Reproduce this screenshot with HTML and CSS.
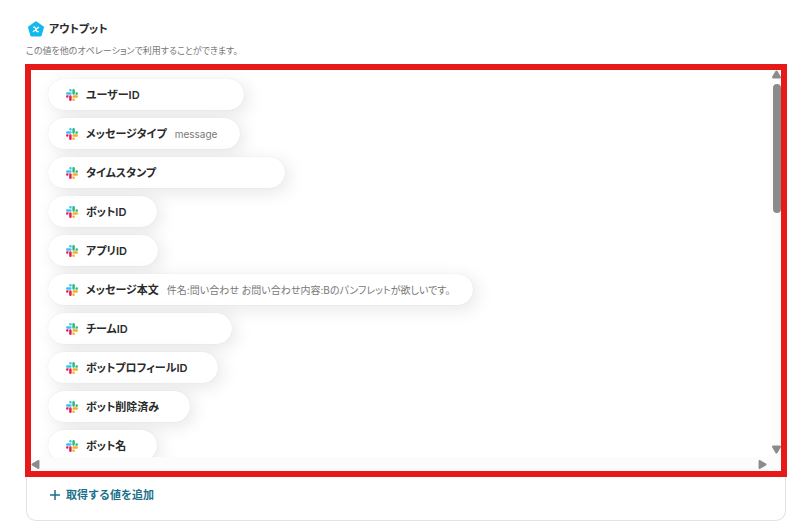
FILE: index.html
```html
<!DOCTYPE html>
<html lang="ja">
<head>
    <meta charset="UTF-8">
    <title>アウトプット</title>
    <link rel="stylesheet" href="styles.css">
</head>
<body>
<svg class="symbols" aria-hidden="true">
    <symbol id="slack" viewBox="0 0 24 24">
        <path fill="#36c5f0" d="M8.8 0a2.5 2.5 0 0 0 0 5h2.5V2.5A2.5 2.5 0 0 0 8.8 0zM8.8 6.3H2.5a2.5 2.5 0 0 0 0 5h6.3a2.5 2.5 0 0 0 0-5z"/>
        <path fill="#2eb67d" d="M24 8.8a2.5 2.5 0 0 0-5 0v2.5h2.5A2.5 2.5 0 0 0 24 8.8zM17.7 8.8V2.5a2.5 2.5 0 0 0-5 0v6.3a2.5 2.5 0 0 0 5 0z"/>
        <path fill="#ecb22e" d="M15.2 24a2.5 2.5 0 0 0 0-5h-2.5v2.5a2.5 2.5 0 0 0 2.5 2.5zM15.2 17.7h6.3a2.5 2.5 0 0 0 0-5h-6.3a2.5 2.5 0 0 0 0 5z"/>
        <path fill="#e8195a" d="M0 15.2a2.5 2.5 0 0 0 5 0v-2.5H2.5A2.5 2.5 0 0 0 0 15.2zM6.3 15.2v6.3a2.5 2.5 0 0 0 5 0v-6.3a2.5 2.5 0 0 0-5 0z"/>
    </symbol>
</svg>
<div class="output">
    <div class="head">
        <svg class="head_icon" viewBox="0 0 16 16" aria-hidden="true">
            <path fill="#12b9ec" stroke="#12b9ec" stroke-width="2" stroke-linejoin="round" d="M8 1.2L15 6.2L12.6 14.6H3.4L1 6.2z"/>
            <path fill="none" stroke="#fff" stroke-width="1.3" stroke-linecap="round" stroke-linejoin="round" d="M5.6 6.2h1.2l2.2 4.4h1.4M10.6 6.2L5.4 10.6"/>
        </svg>
        <h1>アウトプット</h1>
    </div>
    <p class="note">この値を他のオペレーションで利用することができます。</p>

    <div class="card">
        <div class="frame">
            <ul class="list">
                <li><svg class="slack"><use href="#slack"/></svg><span class="name">ユーザーID</span><span class="value blank"></span></li>
                <li><svg class="slack"><use href="#slack"/></svg><span class="name">メッセージタイプ</span><span class="value">message</span></li>
                <li><svg class="slack"><use href="#slack"/></svg><span class="name">タイムスタンプ</span><span class="value blank_long"></span></li>
                <li><svg class="slack"><use href="#slack"/></svg><span class="name">ボットID</span><span class="value"></span></li>
                <li><svg class="slack"><use href="#slack"/></svg><span class="name">アプリID</span><span class="value"></span></li>
                <li><svg class="slack"><use href="#slack"/></svg><span class="name">メッセージ本文</span><span class="value">件名:問い合わせ お問い合わせ内容:Bのパンフレットが欲しいです。</span></li>
                <li><svg class="slack"><use href="#slack"/></svg><span class="name">チームID</span><span class="value blank"></span></li>
                <li><svg class="slack"><use href="#slack"/></svg><span class="name">ボットプロフィールID</span><span class="value"></span></li>
                <li><svg class="slack"><use href="#slack"/></svg><span class="name">ボット削除済み</span><span class="value"></span></li>
                <li><svg class="slack"><use href="#slack"/></svg><span class="name">ボット名</span><span class="value"></span></li>
            </ul>
            <div class="bar_y">
                <button type="button" aria-label="上へ"><svg viewBox="0 0 8 8"><path d="M4 1.5L7 6.5H1z"/></svg></button>
                <span class="thumb"></span>
                <button type="button" class="last" aria-label="下へ"><svg viewBox="0 0 8 8"><path d="M4 6.5L7 1.5H1z"/></svg></button>
            </div>
            <div class="bar_x">
                <button type="button" aria-label="左へ"><svg viewBox="0 0 8 8"><path d="M1.5 4L6.5 1V7z"/></svg></button>
                <button type="button" class="last" aria-label="右へ"><svg viewBox="0 0 8 8"><path d="M6.5 4L1.5 1V7z"/></svg></button>
            </div>
        </div>
        <button type="button" class="add">
            <svg viewBox="0 0 10 10" aria-hidden="true"><path d="M5 0v10M0 5h10"/></svg>
            取得する値を追加
        </button>
    </div>
</div>
</body>
</html>
```

FILE: styles.css
```css
*{
    margin: 0;
    padding: 0;
    box-sizing: border-box;
}
body{
    background-color: #fff;
    color: #2a2a2a;
    font-family: Inter, "Noto Sans CJK JP", sans-serif;
    font-feature-settings: "palt";
}
button{
    border: none;
    background: none;
    font: inherit;
    cursor: pointer;
}
.symbols{
    display: none;
}
.output{
    padding: 20px 24px 8px 26px;
}
.head{
    display: flex;
    align-items: center;
    gap: 5px;
    padding-left: 2px;
}
.head_icon{
    width: 16px;
    height: 16px;
}
.head h1{
    font-size: 11px;
    line-height: 18px;
    font-weight: 600;
}
.note{
    margin: 5px 0;
    font-size: 9px;
    line-height: 16px;
    color: #777;
}
.card{
    border: 1px solid #e3e3e3;
    border-top: none;
    border-radius: 0 0 10px 10px;
}
.frame{
    display: grid;
    grid-template-columns: 1fr 11px;
    grid-template-rows: auto 14px;
    margin: 0 -2px;
    border: 6px solid #e71a1a;
    background-color: #fcfcfc;
}
/* 一覧 */
.list{
    display: flex;
    flex-direction: column;
    align-items: flex-start;
    gap: 8px;
    height: 387px;
    padding: 9px 17px;
    overflow: hidden;
    list-style: none;
    background-color: #fff;
}
.list li{
    flex: none;
    display: flex;
    align-items: center;
    height: 31px;
    padding: 0 23px 0 18px;
    border-radius: 16px;
    background-color: #fff;
    box-shadow: 0 0 1px rgba(0, 0, 0, .12), 4px 4px 18px rgba(0, 0, 0, .1);
    white-space: nowrap;
}
.slack{
    width: 12px;
    height: 12px;
    margin-right: 8px;
}
.name{
    font-size: 11px;
    line-height: 18px;
    font-weight: 600;
}
.value{
    margin-left: 8px;
    font-size: 10px;
    line-height: 18px;
    color: #777;
}
.blank{
    width: 73px;
}
.blank_long{
    width: 98px;
}
/* スクロールバー */
.bar_y,
.bar_x{
    display: flex;
}
.bar_y{
    flex-direction: column;
    align-items: flex-end;
    padding-bottom: 3px;
}
.bar_x{
    align-items: center;
    padding-right: 3px;
}
.bar_y button,
.bar_x button{
    display: flex;
}
.bar_y svg,
.bar_x svg{
    width: 9px;
    height: 9px;
    fill: #8b8b8b;
    stroke: #8b8b8b;
    stroke-width: 2;
    stroke-linejoin: round;
}
.thumb{
    width: 8px;
    height: 129px;
    margin-top: 5px;
    border-radius: 4px;
    background-color: #8b8b8b;
}
.last{
    margin-top: auto;
    margin-left: auto;
}
.bar_x .last{
    margin-top: 0;
}
.add{
    display: flex;
    align-items: center;
    gap: 6px;
    margin: 9px 23px 16px;
    color: #1b7089;
    font-size: 11px;
    line-height: 18px;
    font-weight: 600;
    font-feature-settings: normal;
}
.add svg{
    width: 10px;
    height: 10px;
    fill: none;
    stroke: #1b7089;
    stroke-width: 1.5;
}
```
